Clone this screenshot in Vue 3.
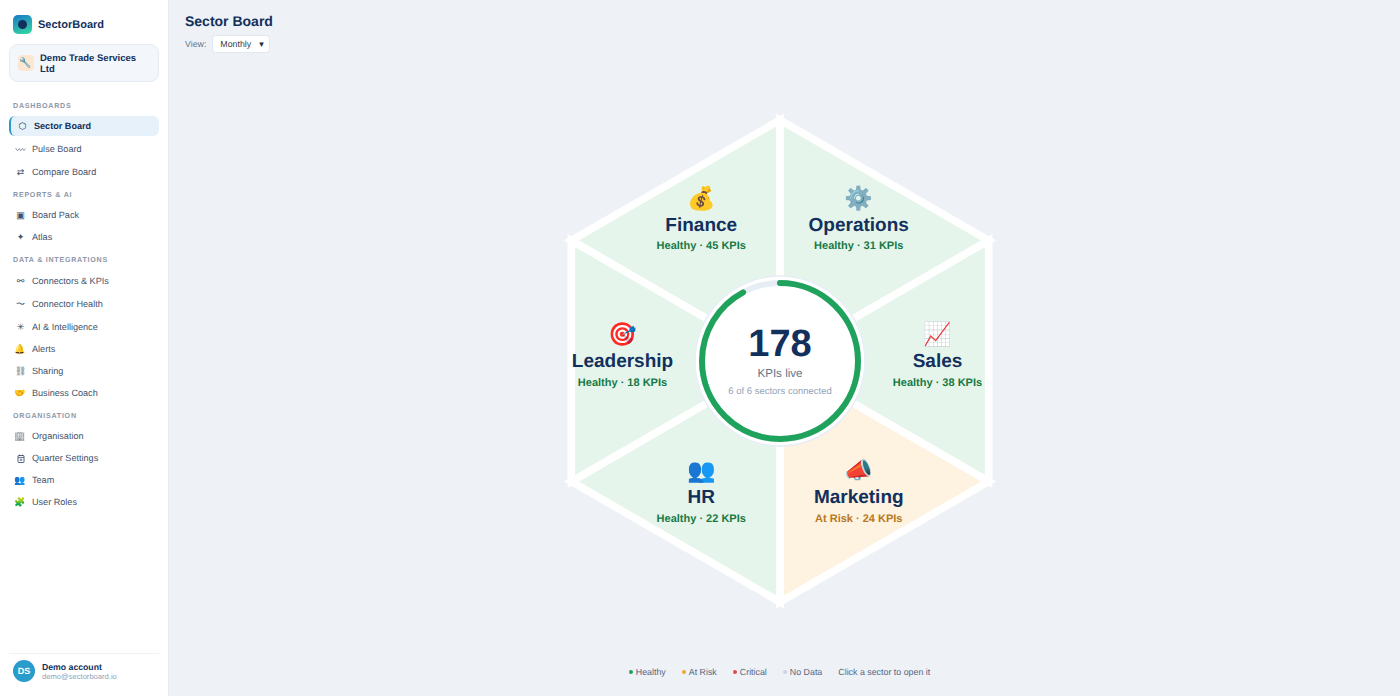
<script setup>
const cx = 250
const cy = 250
const R = 241

const sectors = [
  { name: 'Finance', icon: '💰', status: 'Healthy', kpis: 45, angle: -120, from: -90, to: -150 },
  { name: 'Operations', icon: '⚙️', status: 'Healthy', kpis: 31, angle: -60, from: -90, to: -30 },
  { name: 'Sales', icon: '📈', status: 'Healthy', kpis: 38, angle: 0, from: -30, to: 30 },
  { name: 'Marketing', icon: '📣', status: 'At Risk', kpis: 24, angle: 60, from: 30, to: 90 },
  { name: 'HR', icon: '👥', status: 'Healthy', kpis: 22, angle: 120, from: 90, to: 150 },
  { name: 'Leadership', icon: '🎯', status: 'Healthy', kpis: 18, angle: 180, from: 150, to: 210 }
]

const polar = (deg, r) => {
  const a = (deg * Math.PI) / 180
  return [cx + r * Math.cos(a), cy + r * Math.sin(a)]
}

const points = (s) => [[cx, cy], polar(s.from, R), polar(s.to, R)].map((p) => p.join(',')).join(' ')
const labelX = (s) => polar(s.angle, 157.5)[0]
const labelY = (s) => polar(s.angle, 157.5)[1]

const ringR = 78
const circumference = 2 * Math.PI * ringR
const dash = `${circumference * 0.92} ${circumference}`

const navGroups = [
  {
    title: 'Dashboards',
    items: [
      { label: 'Sector Board', icon: '⬡', active: true },
      { label: 'Pulse Board', svg: 'pulse', tall: true },
      { label: 'Compare Board', icon: '⇄' }
    ]
  },
  {
    title: 'Reports & AI',
    items: [
      { label: 'Board Pack', icon: '▣' },
      { label: 'Atlas', icon: '✦' }
    ]
  },
  {
    title: 'Data & Integrations',
    items: [
      { label: 'Connectors & KPIs', icon: '⚯' },
      { label: 'Connector Health', icon: '〜', tall: true },
      { label: 'AI & Intelligence', icon: '✳' },
      { label: 'Alerts', icon: '🔔' },
      { label: 'Sharing', icon: '⛓' },
      { label: 'Business Coach', icon: '🤝' }
    ]
  },
  {
    title: 'Organisation',
    items: [
      { label: 'Organisation', icon: '🏢' },
      { label: 'Quarter Settings', svg: 'calendar' },
      { label: 'Team', icon: '👥' },
      { label: 'User Roles', icon: '🧩' }
    ]
  }
]

const legend = [
  { label: 'Healthy', color: '#1fa35c' },
  { label: 'At Risk', color: '#efa62c' },
  { label: 'Critical', color: '#e5484d' },
  { label: 'No Data', color: '#cbd5e1' }
]
</script>

<template>
  <div class="layout">
    <aside class="sidebar">
      <div class="brand">
        <span class="logo"><span class="logo-dot"></span></span>
        <span class="brand-name">SectorBoard</span>
      </div>
      <div class="company">
        <span class="company-icon">🔧</span>
        <span class="company-name">Demo Trade Services Ltd</span>
      </div>
      <nav class="nav">
        <div v-for="group in navGroups" :key="group.title" class="nav-group">
          <div class="nav-title">{{ group.title }}</div>
          <a
            v-for="item in group.items"
            :key="item.label"
            class="nav-item"
            :class="{ active: item.active, tall: item.tall }"
          >
            <span class="nav-icon">
              <svg v-if="item.svg === 'pulse'" width="11" height="5" viewBox="0 0 11 5" class="icon-svg">
                <polyline points="0.5,1 2.5,3.8 4.2,1.5 5.6,3.8 7.5,1.2 9,3.6 10.5,1.5" fill="none" stroke="#7a8799" stroke-width="0.8" />
              </svg>
              <svg v-else-if="item.svg === 'calendar'" width="8" height="9" viewBox="0 0 8 9" class="icon-svg">
                <rect x="1" y="1.5" width="6" height="7" rx="0.6" fill="none" stroke="#42526b" stroke-width="0.9" />
                <line x1="1" y1="3.4" x2="7" y2="3.4" stroke="#42526b" stroke-width="0.8" />
                <rect x="2.7" y="4.6" width="2.6" height="2.4" fill="#8da0b8" />
                <line x1="2.5" y1="0.5" x2="2.5" y2="2" stroke="#42526b" stroke-width="0.7" />
                <line x1="5.5" y1="0.5" x2="5.5" y2="2" stroke="#42526b" stroke-width="0.7" />
              </svg>
              <template v-else>{{ item.icon }}</template>
            </span>
            <span>{{ item.label }}</span>
          </a>
        </div>
      </nav>
      <div class="account">
        <span class="avatar">DS</span>
        <div>
          <div class="account-name">Demo account</div>
          <div class="account-mail">demo@sectorboard.io</div>
        </div>
      </div>
    </aside>

    <main class="main">
      <h1 class="title">Sector Board</h1>
      <div class="view-row">
        <span class="view-label">View:</span>
        <span class="select">Monthly <span class="caret">▾</span></span>
      </div>

      <div class="chart">
        <svg width="500" height="500" viewBox="0 0 500 500">
          <g v-for="s in sectors" :key="s.name">
            <polygon
              :points="points(s)"
              :fill="s.status === 'Healthy' ? '#e6f5ec' : '#fef2e0'"
              stroke="#fff"
              stroke-width="7.5"
            />
          </g>
          <g v-for="s in sectors" :key="s.name + '-label'" text-anchor="middle">
            <text :x="labelX(s)" :y="labelY(s) - 19" class="sector-icon">{{ s.icon }}</text>
            <text :x="labelX(s)" :y="labelY(s) + 6" class="sector-name">{{ s.name }}</text>
            <text
              :x="labelX(s)"
              :y="labelY(s) + 24.5"
              class="sector-sub"
              :fill="s.status === 'Healthy' ? '#177a45' : '#b7791f'"
            >{{ s.status }} · {{ s.kpis }} KPIs</text>
          </g>
          <circle :cx="cx" :cy="cy" r="85" fill="#fff" stroke="#e8eef6" stroke-width="1.5" />
          <circle :cx="cx" :cy="cy" :r="ringR" fill="none" stroke="#e6edf5" stroke-width="6" />
          <circle
            :cx="cx"
            :cy="cy"
            :r="ringR"
            fill="none"
            stroke="#1fa35c"
            stroke-width="6"
            stroke-linecap="round"
            :stroke-dasharray="dash"
            :transform="`rotate(-90 ${cx} ${cy})`"
          />
          <text :x="cx" :y="cy - 5" text-anchor="middle" class="total">178</text>
          <text :x="cx" :y="cy + 16" text-anchor="middle" class="total-label">KPIs live</text>
          <text :x="cx" :y="cy + 33" text-anchor="middle" class="total-sub">6 of 6 sectors connected</text>
        </svg>
      </div>

      <div class="legend">
        <span v-for="l in legend" :key="l.label" class="legend-item">
          <span class="dot" :style="{ background: l.color }"></span>{{ l.label }}
        </span>
        <span>Click a sector to open it</span>
      </div>
    </main>
  </div>
</template>

<style>
body {
  margin: 0;
}
</style>

<style scoped>
.layout {
  display: flex;
  height: 696px;
  overflow: hidden;
  background: #eef1f6;
  font-family: "Liberation Sans", Arial, sans-serif;
  color: #12305c;
  text-rendering: geometricPrecision;
}
.sidebar {
  width: 169px;
  flex-shrink: 0;
  box-sizing: border-box;
  background: #fff;
  border-right: 1px solid #e5e9f0;
  padding: 15px 9px 0;
  display: flex;
  flex-direction: column;
}
.brand {
  display: flex;
  align-items: center;
  gap: 6px;
  padding: 0 4px;
  height: 19px;
}
.logo {
  width: 19px;
  height: 19px;
  border-radius: 5px;
  background: linear-gradient(160deg, #1a78c8, #34dca0);
  display: flex;
  align-items: center;
  justify-content: center;
}
.logo-dot {
  width: 9px;
  height: 9px;
  border-radius: 50%;
  background: #12305c;
}
.brand-name {
  font-size: 11px;
  font-weight: 700;
}
.company {
  margin-top: 10px;
  height: 38px;
  box-sizing: border-box;
  background: #f3f7fb;
  border: 1px solid #e4eaf2;
  border-radius: 9px;
  padding: 0 8px;
  display: flex;
  align-items: center;
  gap: 6px;
}
.company-icon {
  width: 16px;
  height: 16px;
  flex-shrink: 0;
  border-radius: 4px;
  background: #fde7d3;
  font-size: 10px;
  display: flex;
  align-items: center;
  justify-content: center;
}
.company-name {
  font-size: 9.5px;
  font-weight: 700;
  line-height: 11px;
  padding-top: 2px;
}
.nav {
  margin-top: 20px;
  flex: 1;
}
.nav-group {
  margin-bottom: 7.5px;
}
.nav-title {
  font-size: 7.125px;
  line-height: 9px;
  font-weight: 700;
  letter-spacing: 0.75px;
  text-transform: uppercase;
  color: #8d98a9;
  padding: 0 4px;
  margin-bottom: 5px;
}
.nav-item {
  display: flex;
  align-items: center;
  gap: 5px;
  padding: 5.5px 5px;
  font-size: 9.1px;
  line-height: 11px;
  color: #42526b;
}
.nav-item.tall {
  padding-top: 6.5px;
  padding-bottom: 6.5px;
}
.nav-item.active {
  padding-top: 4.5px;
  padding-bottom: 4.5px;
  background: #e6f1fa;
  border-left: 2px solid #2a9ccb;
  border-radius: 6px;
  font-weight: 700;
  color: #12305c;
  margin-bottom: 1px;
}
.nav-icon {
  width: 13px;
  height: 11px;
  text-align: center;
  flex-shrink: 0;
  font-size: 9.1px;
  font-weight: 400;
  font-family: "Liberation Sans", "DejaVu Sans", sans-serif;
}
.icon-svg {
  display: inline-block;
  vertical-align: middle;
}
.account {
  border-top: 1px solid #eef1f6;
  padding: 6px 4px 14px;
  display: flex;
  align-items: center;
  gap: 7px;
}
.avatar {
  width: 22px;
  height: 22px;
  border-radius: 50%;
  background: #2a9ccb;
  color: #fff;
  font-size: 9px;
  font-weight: 700;
  display: flex;
  align-items: center;
  justify-content: center;
}
.account-name {
  font-size: 8.7px;
  font-weight: 700;
}
.account-mail {
  font-size: 7.6px;
  color: #94a3b8;
}
.main {
  flex: 1;
  min-width: 0;
  padding: 12px 26px 0 16px;
  display: flex;
  flex-direction: column;
}
.title {
  margin: 0;
  font-size: 14px;
  font-weight: 700;
  line-height: 18px;
}
.view-row {
  display: flex;
  align-items: center;
  gap: 6px;
  margin-top: 5px;
  font-size: 8.8px;
  color: #64748b;
}
.select {
  background: #fff;
  border: 1px solid #e2e8f0;
  border-radius: 4px;
  color: #334155;
  padding: 2px 5px 2px 7px;
  height: 12px;
  line-height: 12px;
  display: inline-flex;
  gap: 8px;
}
.caret {
  color: #1e293b;
  font-size: 9px;
}
.chart {
  display: flex;
  justify-content: center;
  margin-top: 58px;
}
.sector-icon {
  font-size: 23px;
}
.sector-name {
  font-size: 19px;
  font-weight: 700;
  fill: #12305c;
}
.sector-sub {
  font-size: 11px;
  font-weight: 700;
}
.total {
  font-size: 38px;
  font-weight: 700;
  fill: #12305c;
}
.total-label {
  font-size: 11.6px;
  fill: #64748b;
}
.total-sub {
  font-size: 9.5px;
  fill: #94a3b8;
}
.legend {
  display: flex;
  justify-content: center;
  gap: 16px;
  margin-top: 56px;
  font-size: 8.85px;
  color: #566680;
}
.legend-item {
  display: inline-flex;
  align-items: center;
  gap: 3px;
}
.dot {
  width: 4px;
  height: 4px;
  border-radius: 50%;
}
</style>
